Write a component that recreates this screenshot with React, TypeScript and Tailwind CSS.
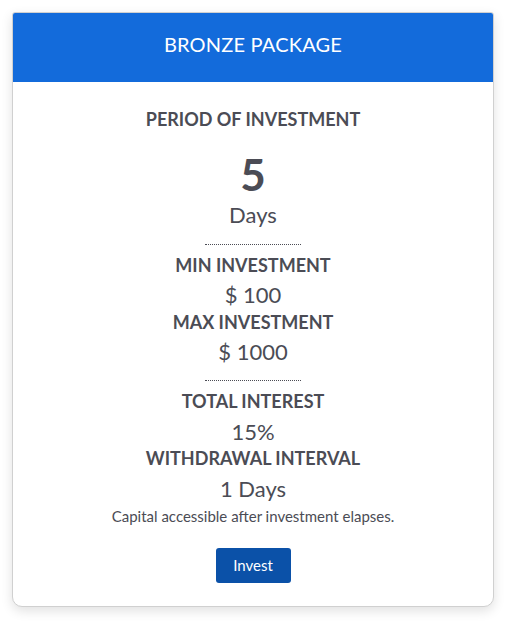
import React from "react";

export default function App() {
  const label = "text-[18px] leading-[24px] font-bold text-[#4b4c55]";
  const value = "text-[22px] leading-[28px] text-[#4b4c55]";
  return (
    <div className="w-[512px] h-[624px] bg-white" style={{ fontFamily: "Lato, 'Open Sans', sans-serif" }}>
      <div className="ml-3 mt-3 w-[482px] rounded-b-[10px] rounded-t-[3px] border border-[#d0d0d0] bg-white shadow-[0_4px_12px_rgba(0,0,0,0.12)] overflow-hidden">
        <div className="h-[69px] bg-[#136bdb] flex justify-center pt-[17px]">
          <span className="text-[20px] leading-[28px] text-white tracking-[0.2px]">BRONZE PACKAGE</span>
        </div>
        <div className="flex flex-col items-center pt-[25px] pb-[23px] text-center">
          <div className={label}>PERIOD OF INVESTMENT</div>
          <div className="mt-[17px] text-[44px] leading-[52px] font-bold text-[#4b4c55]">5</div>
          <div className={`mt-[1px] ${value}`}>Days</div>
          <div className="mt-[15px] w-[96px] border-t border-dotted border-[#4b4c55]" />
          <div className={`mt-[8px] ${label}`}>MIN INVESTMENT</div>
          <div className={`mt-[4px] ${value}`}>$ 100</div>
          <div className={`mt-[1px] ${label}`}>MAX INVESTMENT</div>
          <div className={`mt-[4px] ${value}`}>$ 1000</div>
          <div className="mt-[14px] w-[96px] border-t border-dotted border-[#4b4c55]" />
          <div className={`mt-[8px] ${label}`}>TOTAL INTEREST</div>
          <div className={`mt-[5px] ${value}`}>15%</div>
          <div className={`mt-0 ${label}`}>WITHDRAWAL INTERVAL</div>
          <div className={`mt-[5px] ${value}`}>1 Days</div>
          <div className="mt-[3px] text-[15px] leading-[20px] text-[#4b4c55]">Capital accessible after investment elapses.</div>
          <button className="mt-[22px] h-[35px] w-[75px] rounded-[3px] bg-[#0b51a8] text-[15px] text-white">Invest</button>
        </div>
      </div>
    </div>
  );
}
